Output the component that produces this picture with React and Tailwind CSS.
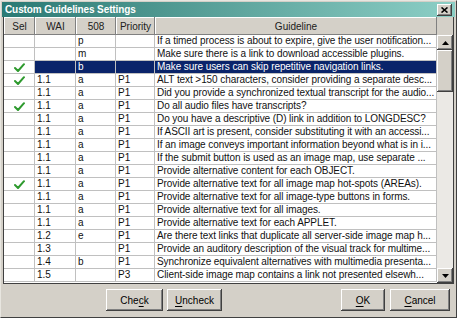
import React from 'react';

const rows = [
    { sel: false, wai: '', s508: 'p', pri: '', text: 'If a timed process is about to expire, give the user notification...' },
    { sel: false, wai: '', s508: 'm', pri: '', text: 'Make sure there is a link to download accessible plugins.' },
    { sel: true, wai: '', s508: 'b', pri: '', text: 'Make sure users can skip repetitive navigation links.', active: true },
    { sel: true, wai: '1.1', s508: 'a', pri: 'P1', text: 'ALT text >150 characters, consider providing a separate desc...' },
    { sel: false, wai: '1.1', s508: 'a', pri: 'P1', text: 'Did you provide a synchronized textual transcript for the audio...' },
    { sel: true, wai: '1.1', s508: 'a', pri: 'P1', text: 'Do all audio files have transcripts?' },
    { sel: false, wai: '1.1', s508: 'a', pri: 'P1', text: 'Do you have a descriptive (D) link in addition to LONGDESC?' },
    { sel: false, wai: '1.1', s508: 'a', pri: 'P1', text: 'If ASCII art is present, consider substituting it with an accessi...' },
    { sel: false, wai: '1.1', s508: 'a', pri: 'P1', text: 'If an image conveys important information beyond what is in i...' },
    { sel: false, wai: '1.1', s508: 'a', pri: 'P1', text: 'If the submit button is used as an image map, use separate ...' },
    { sel: false, wai: '1.1', s508: 'a', pri: 'P1', text: 'Provide alternative content for each OBJECT.' },
    { sel: true, wai: '1.1', s508: 'a', pri: 'P1', text: 'Provide alternative text for all image map hot-spots (AREAs).' },
    { sel: false, wai: '1.1', s508: 'a', pri: 'P1', text: 'Provide alternative text for all image-type buttons in forms.' },
    { sel: false, wai: '1.1', s508: 'a', pri: 'P1', text: 'Provide alternative text for all images.' },
    { sel: false, wai: '1.1', s508: 'a', pri: 'P1', text: 'Provide alternative text for each APPLET.' },
    { sel: false, wai: '1.2', s508: 'e', pri: 'P1', text: 'Are there text links that duplicate all server-side image map h...' },
    { sel: false, wai: '1.3', s508: '', pri: 'P1', text: 'Provide an auditory description of the visual track for multime...' },
    { sel: false, wai: '1.4', s508: 'b', pri: 'P1', text: 'Synchronize equivalent alternatives with multimedia presenta...' },
    { sel: false, wai: '1.5', s508: '', pri: 'P3', text: 'Client-side image map contains a link not presented elsewh...' },
];

const raised = 'shadow-[inset_-1px_-1px_#404040,inset_1px_1px_#ffffff,inset_-2px_-2px_#808080,inset_2px_2px_#d4d0c8]';

const Check = () => (
    <svg width="11" height="9" viewBox="0 0 11 9">
        <path d="M1 5 L4 8 L10 1.2" fill="none" stroke="#2e9a2e" strokeWidth="2" strokeLinecap="round" strokeLinejoin="round" />
    </svg>
);

const Arrow = ({ down }) => (
    <svg width="7" height="4" viewBox="0 0 7 4">
        <path d={down ? 'M0 0 H7 L3.5 4 Z' : 'M0 4 H7 L3.5 0 Z'} fill="#000" />
    </svg>
);

const Button = ({ w, pre, u, post }) => (
    <button className={`h-[22px] ${w} bg-[#d4d0c8] ${raised} text-[10px] text-black flex items-center justify-center`}>
        {pre}<span className="underline underline-offset-2">{u}</span>{post}
    </button>
);

export default function App() {
    const cell = 'h-full border-r border-[#c0c0c0] pl-[2px] overflow-hidden whitespace-nowrap';

    return (
        <div
            className="w-[457px] h-[318px] bg-[#d4d0c8] border border-t-[#e8e6e0] border-l-[#e8e6e0] border-r-[#404040] border-b-[#404040] p-[1px] flex flex-col overflow-hidden"
            style={{ fontFamily: '"Liberation Sans", Arial, sans-serif' }}
        >
            {/* Title bar */}
            <div className="h-[15px] shrink-0 flex items-center justify-between bg-linear-to-r from-[#2a7a74] to-[#8ccfc6] pl-[3px] pr-[3px]">
                <span className="text-white font-bold text-[10px] leading-none tracking-[-0.1px]">Custom Guidelines Settings</span>
                <button className={`w-[15px] h-[12px] bg-[#d4d0c8] ${raised} flex items-center justify-center`}>
                    <svg width="7" height="6" viewBox="0 0 7 6">
                        <path d="M0.5 0.5 L6.5 5.5 M6.5 0.5 L0.5 5.5" stroke="#000" strokeWidth="1.6" />
                    </svg>
                </button>
            </div>

            {/* Table */}
            <div className="mx-[1px] h-[267px] shrink-0 flex border-l border-r border-b border-[#404040]">
                <div className="w-[433px] flex flex-col">
                    <div className="h-[18px] flex text-[10px] text-[#202020]">
                        {[['Sel', 'w-[31px]'], ['WAI', 'w-[41px]'], ['508', 'w-[40px]'], ['Priority', 'w-[39px]'], ['Guideline', 'w-[282px]']].map(([t, w]) => (
                            <div key={t} className={`${w} h-full flex items-center justify-center bg-[#d4d0c8] shadow-[inset_-1px_-1px_#808080,inset_1px_1px_#ffffff]`}>
                                {t}
                            </div>
                        ))}
                    </div>
                    <div className="h-[248px] overflow-hidden bg-white text-[10px] leading-[12px] text-[#111]">
                        {rows.map((r, i) => {
                            const hl = r.active ? 'bg-[#0a246a] text-white' : '';
                            return (
                                <div key={i} className="h-[13px] flex border-b border-[#c0c0c0]">
                                    <div className="w-[31px] h-full border-r border-[#c0c0c0] flex items-center justify-center">
                                        {r.sel && <Check />}
                                    </div>
                                    <div className={`w-[41px] ${cell} ${hl}`}>{r.wai}</div>
                                    <div className={`w-[40px] ${cell} ${hl}`}>{r.s508}</div>
                                    <div className={`w-[39px] ${cell} ${hl}`}>{r.pri}</div>
                                    <div className={`w-[282px] ${cell} tracking-[-0.08px] ${hl}`}>{r.text}</div>
                                </div>
                            );
                        })}
                    </div>
                </div>

                {/* Scrollbar */}
                <div className="w-[16px] flex flex-col">
                    <div className="h-[18px] bg-[#d4d0c8]" />
                    <div className="h-[248px] flex flex-col bg-[#ebe9e5]">
                        <div className={`h-[15px] bg-[#d4d0c8] ${raised} flex items-center justify-center`}>
                            <Arrow />
                        </div>
                        <div className={`h-[42px] bg-[#d4d0c8] ${raised}`} />
                        <div className="flex-1" />
                        <div className={`h-[15px] bg-[#d4d0c8] ${raised} flex items-center justify-center`}>
                            <Arrow down />
                        </div>
                    </div>
                </div>
            </div>

            {/* Buttons */}
            <div className="flex-1 flex items-start justify-between pt-[5px] pl-[104px] pr-[5px]">
                <div className="flex gap-[4px]">
                    <Button w="w-[57px]" pre="Che" u="c" post="k" />
                    <Button w="w-[55px]" pre="" u="U" post="ncheck" />
                </div>
                <div className="flex gap-[5px]">
                    <Button w="w-[44px]" pre="" u="O" post="K" />
                    <Button w="w-[60px]" pre="" u="C" post="ancel" />
                </div>
            </div>
        </div>
    );
}
